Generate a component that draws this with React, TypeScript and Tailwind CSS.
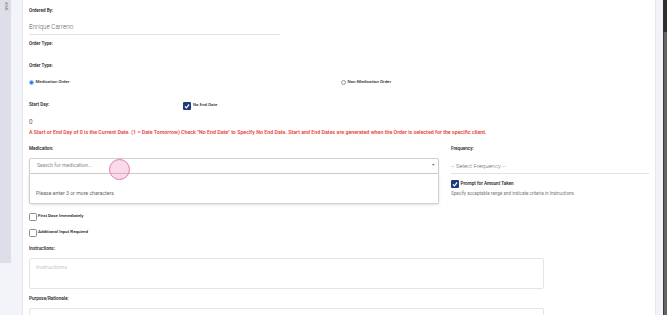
import React from "react";

function Check({ checked }: { checked?: boolean }) {
  if (checked) {
    return (
      <span className="flex h-[8px] w-[8px] shrink-0 items-center justify-center rounded-[1px] bg-[#1d3c78]">
        <svg width="6" height="6" viewBox="0 0 10 10">
          <path d="M1.5 5.5 L4 8 L8.5 2.5" stroke="#fff" strokeWidth="2" fill="none" />
        </svg>
      </span>
    );
  }
  return <span className="block h-[8px] w-[8px] shrink-0 rounded-[1.5px] border border-[#8a8a8a] bg-white" />;
}

function Label({ children, className = "" }: { children: React.ReactNode; className?: string }) {
  return (
    <div className={"h-[6px] text-[4.6px] leading-[6px] font-semibold text-[#2d2d2d] " + className}>{children}</div>
  );
}

export default function App() {
  return (
    <div className="flex h-[315px] w-[667px] overflow-hidden bg-[#f3f4f9] font-['Roboto',sans-serif]">
      {/* sidebar */}
      <div className="w-[11px] shrink-0">
        <div className="flex h-[263px] justify-center bg-[#dcdfe8] pt-[2px]">
          <span className="text-[3px] leading-[3px] text-[#777] [writing-mode:vertical-rl]">HOME</span>
        </div>
      </div>
      <div className="w-[11px] shrink-0" />
      {/* card */}
      <div className="relative w-[633px] shrink-0 border-l border-[#e4e6ee] bg-white pl-[6px] pt-[8px]">
        <Label>Ordered By:</Label>
        <div className="mt-[8px] flex h-[13px] w-[251px] items-center border-b border-[#e2e2e2] text-[6.3px] font-light text-[#555]">
          Enrique Carreno
        </div>
        <Label className="mt-[6px]">Order Type:</Label>
        <Label className="mt-[16px]">Order Type:</Label>
        <div className="mt-[10px] flex h-[6px] items-center text-[4.4px] font-medium text-[#2d2d2d]">
          <div className="flex w-[312px] items-center gap-[1.5px]">
            <span className="flex h-[5px] w-[5px] items-center justify-center rounded-full border border-[#9cc2f2] bg-[#2b7de9]" />
            <span>Medication Order</span>
          </div>
          <div className="flex items-center gap-[1.5px]">
            <span className="block h-[5px] w-[5px] rounded-full border border-[#999] bg-white" />
            <span>Non-Medication Order</span>
          </div>
        </div>
        <div className="mt-[16px] flex h-[9px] items-center">
          <div className="w-[154px] text-[4.6px] font-semibold text-[#2d2d2d]">Start Day:</div>
          <Check checked />
          <span className="ml-[2px] text-[4.4px] font-medium text-[#2d2d2d]">No End Date</span>
        </div>
        <div className="mt-[8px] h-[8px] text-[6.4px] leading-[8px] text-[#666]">0</div>
        <div className="mt-[3px] h-[6px] whitespace-nowrap text-[5.3px] leading-[6px] font-semibold text-[#e8453c]">
          A Start or End Day of 0 is the Current Date. (1 = Date Tomorrow) Check "No End Date" to Specify No End Date. Start and End Dates are generated when the Order is selected for the specific client.
        </div>
        <div className="mt-[11px] flex gap-[12px]">
          {/* left column */}
          <div className="relative w-[410px]">
            <Label>Medication:</Label>
            <div className="relative mt-[6px] flex h-[16px] items-center rounded-t-[2px] border border-[#cfcfcf] bg-white pl-[7px] shadow-[0_1px_2px_rgba(0,0,0,0.08)]">
              <span className="text-[5.2px] text-[#8a8a8a]">Search for medication...</span>
              <span className="absolute right-[3px] top-[4px] text-[3.5px] text-[#666]">▼</span>
            </div>
            {/* hidden row behind dropdown */}
            <div className="mt-[12px] flex h-[18px] gap-[10px]">
              <div className="h-full w-[94px] rounded-[3px] border border-[#e6e6e6]" />
              <div className="h-full w-[94px] rounded-[3px] border border-[#ececec]" />
              <div className="h-full w-[53px] rounded-[3px] border border-[#ececec]" />
              <div className="h-full w-[137px] rounded-[3px] border border-[#ececec]" />
            </div>
            {/* dropdown */}
            <div className="absolute left-0 top-[28px] z-10 flex h-[30px] w-[410px] items-end rounded-b-[2px] border border-t-0 border-[#cfcfcf] bg-white pb-[5px] pl-[6px] shadow-[0_1px_3px_rgba(0,0,0,0.12)]">
              <span className="text-[5.2px] text-[#666]">Please enter 3 or more characters</span>
            </div>
            {/* cursor highlight */}
            <div className="absolute left-[80px] top-[13px] z-20 h-[21px] w-[21px] rounded-full border border-[#e07ab0] bg-[rgba(236,80,150,0.22)]" />
          </div>
          {/* right column */}
          <div className="w-[198px]">
            <Label>Frequency:</Label>
            <div className="mt-[6px] flex h-[16px] items-center border-b border-[#e2e2e2] text-[6px] font-light text-[#666]">
              -- Select Frequency --
            </div>
            <div className="mt-[6px] flex h-[8px] items-center">
              <Check checked />
              <span className="ml-[1.5px] text-[4.6px] font-semibold text-[#2d2d2d]">Prompt for Amount Taken</span>
            </div>
            <div className="mt-[3px] h-[5px] whitespace-nowrap text-[4.6px] leading-[5px] text-[#777]">
              Specify acceptable range and indicate criteria in Instructions
            </div>
          </div>
        </div>
        <div className="mt-[9px] flex h-[8px] items-center">
          <Check />
          <span className="ml-[1px] -translate-y-[1px] text-[4.4px] font-semibold text-[#2d2d2d]">First Dose Immediately</span>
        </div>
        <div className="mt-[8px] flex h-[8px] items-center">
          <Check />
          <span className="ml-[1px] -translate-y-[1px] text-[4.4px] font-semibold text-[#2d2d2d]">Additional Input Required</span>
        </div>
        <Label className="mt-[9px]">Instructions:</Label>
        <div className="mt-[6px] h-[31px] w-[515px] rounded-[2px] border border-[#e4e4e4] pl-[6px] pt-[3px] text-[6px] font-light text-[#aaa]">
          Instructions
        </div>
        <Label className="mt-[7px]">Purpose/Rationale:</Label>
        <div className="mt-[6px] h-[31px] w-[515px] rounded-[2px] border border-[#e4e4e4] pl-[6px] pt-[3px] text-[6px] font-light text-[#aaa]">
          Purpose/Rationale
        </div>
      </div>
      {/* right strip */}
      <div className="w-[8px] shrink-0 border-l border-[#e6e7ef] bg-[#f3f4fa]" />
      {/* scrollbar */}
      <div className="flex w-[5px] shrink-0 flex-col bg-[#2e2e2e]">
        <div className="h-[32px]" />
        <div className="flex-1 border-l border-r border-[#3c3c3c] bg-[#646464]" />
      </div>
    </div>
  );
}
